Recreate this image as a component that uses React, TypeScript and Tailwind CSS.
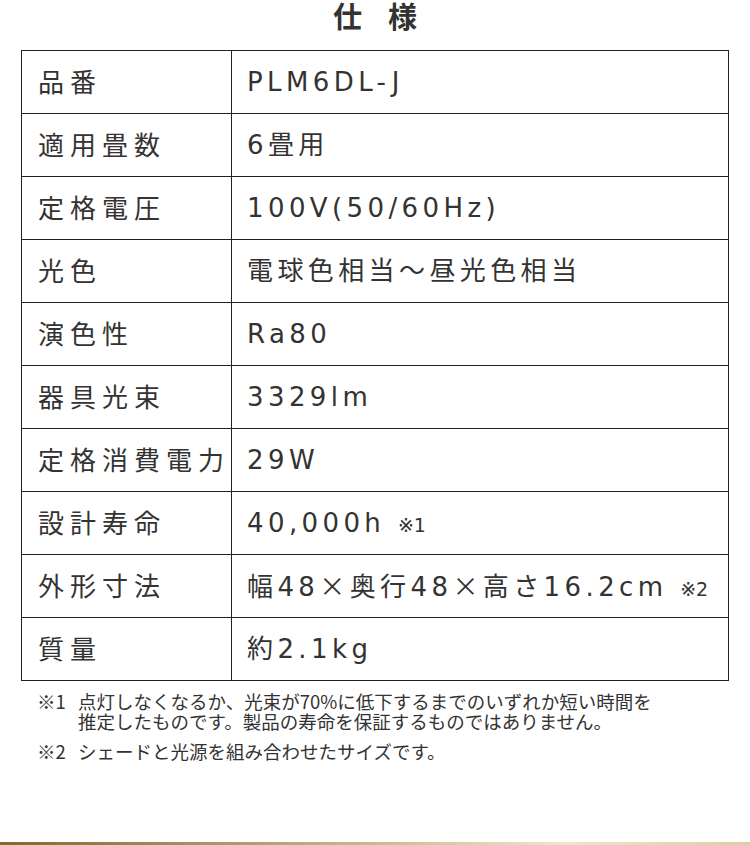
const X = () => <span style={{ fontFamily: '"Noto Sans CJK JP", sans-serif' }}>×</span>

const specs: [string, React.ReactNode][] = [
  ["品番", "PLM6DL-J"],
  ["適用畳数", "6畳用"],
  ["定格電圧", "100V(50/60Hz)"],
  ["光色", "電球色相当～昼光色相当"],
  ["演色性", "Ra80"],
  ["器具光束", "3329lm"],
  ["定格消費電力", "29W"],
  ["設計寿命", <>40,000h <span className="text-[19px] tracking-normal">※1</span></>],
  ["外形寸法", <>幅48<X />奥行48<X />高さ16.2cm <span className="text-[19px] tracking-normal">※2</span></>],
  ["質量", "約2.1kg"],
]

export default function App() {
  return (
    <div
      className="relative h-[845px] w-[750px] overflow-hidden bg-white text-[#333]"
      style={{ fontFamily: '"Noto Sans CJK JP", "Noto Sans", sans-serif' }}
    >
      <h1 className="-mt-[1px] text-center text-[29px] leading-[32px] font-bold tracking-[0.9em] pl-[0.9em] text-[#333]">
        仕様
      </h1>

      <table className="mx-[21px] mt-[19px] w-[708px] border-collapse">
        <tbody>
          {specs.map(([label, value]) => (
            <tr key={label} className="h-[63px]">
              <td className="w-[210px] border border-[#222] pl-[16px] pb-[3px] text-[26px] tracking-[0.23em] whitespace-nowrap">
                {label}
              </td>
              <td
                className="border border-[#222] pl-[15px] text-[26px] tracking-[4.4px] whitespace-nowrap"
                style={{ fontFamily: '"DejaVu Sans", "Noto Sans CJK JP", sans-serif' }}
              >
                {value}
              </td>
            </tr>
          ))}
        </tbody>
      </table>

      <div className="mt-[10px] pl-[37px] text-[18.5px] leading-[20px]">
        <div className="flex">
          <span className="w-[41px] shrink-0">※1</span>
          <p>
            点灯しなくなるか、光束が70%に低下するまでのいずれか短い時間を
            <br />
            推定したものです。製品の寿命を保証するものではありません。
          </p>
        </div>
        <div className="mt-[10px] flex">
          <span className="w-[41px] shrink-0">※2</span>
          <p>シェードと光源を組み合わせたサイズです。</p>
        </div>
      </div>

      <div className="absolute bottom-0 left-0 h-[3px] w-full bg-gradient-to-r from-[#7d6a2e] via-[#efe6c8] via-75% to-[#d8cfa8]" />
    </div>
  )
}
